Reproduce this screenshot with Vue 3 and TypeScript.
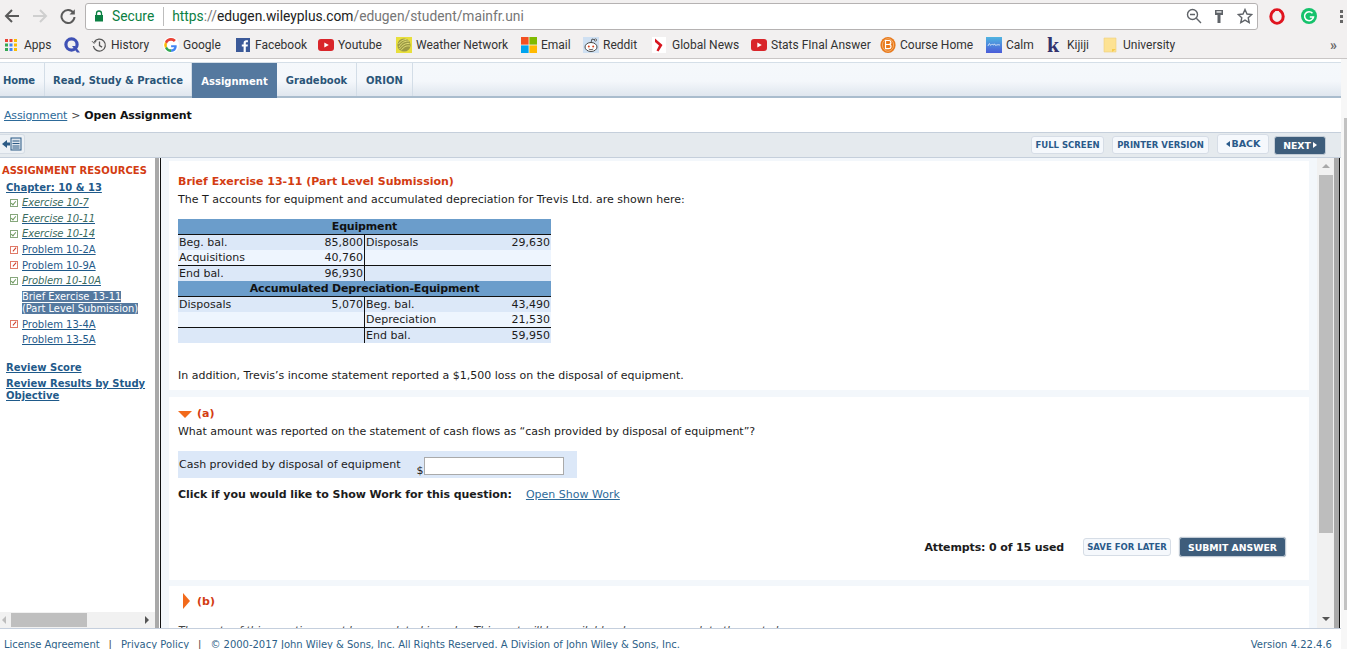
<script setup lang="ts">
interface Bookmark {
  label: string
  width: number
  icon: string
}

const bookmarks: Bookmark[] = [
  { label: 'Apps', width: 59, icon: '<svg width="16" height="16" viewBox="0 0 16 16"><g><rect x="1" y="2" width="3" height="3" fill="#ea4335"/><rect x="5.500" y="2" width="3" height="3" fill="#ea4335"/><rect x="10" y="2" width="3" height="3" fill="#fbbc05"/><rect x="1" y="6.500" width="3" height="3" fill="#34a853"/><rect x="5.500" y="6.500" width="3" height="3" fill="#4285f4"/><rect x="10" y="6.500" width="3" height="3" fill="#fbbc05"/><rect x="1" y="11" width="3" height="3" fill="#34a853"/><rect x="5.500" y="11" width="3" height="3" fill="#4285f4"/><rect x="10" y="11" width="3" height="3" fill="#fbbc05"/></g></svg>' },
  { label: '', width: 28, icon: '<svg width="18" height="18" viewBox="0 0 18 18"><circle cx="8.500" cy="8.500" r="5.600" fill="none" stroke="#3f51b5" stroke-width="3.200"/><path d="M9 10l5 6.500h3L12 10z" fill="#3f51b5"/></svg>' },
  { label: 'History', width: 72, icon: '<svg width="16" height="16" viewBox="0 0 16 16" fill="none" stroke="#555" stroke-width="1.300"><path d="M3.200 5a6 6 0 1 1-.8 4"/><path d="M1 4.200l2.200 2.200 2-2.400" stroke-width="1"/><path d="M8.500 4.500V8.600l2.600 1.500"/></svg>' },
  { label: 'Google', width: 72, icon: '<svg width="16" height="16" viewBox="0 0 16 16"><circle cx="8" cy="8" r="8" fill="#fff"/><path d="M13.600 8.200H8.100v2h3.200c-.4 1.300-1.600 2.100-3.200 2.100V15c3.200 0 5.600-2.300 5.600-5.700z" fill="#4285f4"/><path d="M8.100 12.300A4.200 4.200 0 0 1 4 9.400l-2 1.900A6.800 6.800 0 0 0 8.100 15z" fill="#34a853"/><path d="M4 9.400a4.300 4.300 0 0 1 0-2.700L2 4.800a7 7 0 0 0 0 6.500z" fill="#fbbc05"/><path d="M8.100 3.800c1.100 0 2 .4 2.800 1.100l2-2A6.800 6.800 0 0 0 2 4.800l2 1.900a4.200 4.200 0 0 1 4.100-2.900z" fill="#ea4335"/></svg>' },
  { label: 'Facebook', width: 83, icon: '<svg width="16" height="16" viewBox="0 0 16 16"><rect x="1" y="1" width="14" height="14" fill="#3b5998"/><path d="M10.800 15V9.600h1.800l.3-2.100h-2.100V6.200c0-.6.2-1 1-1h1.100V3.300c-.2 0-.9-.1-1.600-.1-1.600 0-2.700 1-2.700 2.800v1.500H6.800v2.100h1.800V15z" fill="#fff"/></svg>' },
  { label: 'Youtube', width: 78, icon: '<svg width="16" height="16" viewBox="0 0 16 16"><rect x="0" y="2" width="16" height="12" rx="3" fill="#d9252a"/><path d="M6.300 5.400v5.200L10.800 8z" fill="#fff"/></svg>' },
  { label: 'Weather Network', width: 125, icon: '<svg width="16" height="16" viewBox="0 0 16 16"><rect width="16" height="16" fill="#e8df3c"/><circle cx="8" cy="8" r="6.600" fill="#9c9a45"/><path d="M3 10c3-5 6-6 10-6M3.500 12c3-4 6-6 10-5.500M5 13.500c3-4 5-5 9-4.500M2.500 7c2-3 5-4.500 8-4.500" stroke="#e8e47a" stroke-width=".9" fill="none"/></svg>' },
  { label: 'Email', width: 62, icon: '<svg width="16" height="16" viewBox="0 0 16 16"><rect x="0" width="7.600" height="7.600" fill="#f25022"/><rect x="8.400" width="7.600" height="7.600" fill="#7fba00"/><rect x="0" y="8.400" width="7.600" height="7.600" fill="#00a4ef"/><rect x="8.400" y="8.400" width="7.600" height="7.600" fill="#ffb900"/></svg>' },
  { label: 'Reddit', width: 69, icon: '<svg width="16" height="16" viewBox="0 0 16 16"><rect width="16" height="16" fill="#cfe0f2"/><ellipse cx="8" cy="10" rx="6" ry="4.500" fill="#fff" stroke="#333" stroke-width=".9"/><circle cx="5.800" cy="9.400" r="1" fill="#d9401c"/><circle cx="10.200" cy="9.400" r="1" fill="#d9401c"/><path d="M5.800 12c1.400.9 3 .9 4.400 0M8 5.500l1-3.500 3 .8" stroke="#333" stroke-width=".8" fill="none"/><circle cx="12.500" cy="3" r="1.100" fill="#fff" stroke="#333" stroke-width=".7"/></svg>' },
  { label: 'Global News', width: 99, icon: '<svg width="16" height="16" viewBox="0 0 16 16"><rect x="0" width="14" height="16" fill="#fff"/><path d="M3 1.500L10.500 8l-4 6.500-2-1 2.500-5L3 5z" fill="#d8151f"/></svg>' },
  { label: 'Stats FInal Answer', width: 129, icon: '<svg width="16" height="16" viewBox="0 0 16 16"><rect x="0" y="2" width="16" height="12" rx="3" fill="#d9252a"/><path d="M6.300 5.400v5.200L10.800 8z" fill="#fff"/></svg>' },
  { label: 'Course Home', width: 106, icon: '<svg width="16" height="16" viewBox="0 0 16 16"><ellipse cx="8" cy="8" rx="7.600" ry="8" fill="#e8781a"/><ellipse cx="8" cy="8" rx="5.600" ry="6.300" fill="none" stroke="#f7c590" stroke-width=".7"/><path d="M5.500 3.500h3.200a2 2 0 0 1 .8 3.900 2.200 2.200 0 0 1-.8 4.300H5.500zM5.500 7.500h3.500" fill="none" stroke="#fff" stroke-width="1.200"/></svg>' },
  { label: 'Calm', width: 61, icon: '<svg width="16" height="16" viewBox="0 0 16 16"><defs><linearGradient id="calm" x1="0" y1="0" x2="0" y2="1"><stop offset="0" stop-color="#4fb4e0"/><stop offset="1" stop-color="#4a5bd8"/></linearGradient></defs><rect width="16" height="16" fill="url(#calm)"/><path d="M2 9c1-3 2-3 2-1 1 1 2-2 3 0 1 1 1-3 2 0 1 1 2-1 5 0" stroke="#fff" stroke-width=".7" fill="none"/></svg>' },
  { label: 'Kijiji', width: 56, icon: '<span class="kijiji">k</span>' },
  { label: 'University', width: 90, icon: '<svg width="16" height="16" viewBox="0 0 16 16"><path d="M1 1h12v14H1z" fill="#fde293" stroke="#eed27c" stroke-width=".6"/><path d="M9 15v-3h4" fill="#f7cb4d"/></svg>' },
]

const menuTabs = [
  { label: 'Home', width: 45 },
  { label: 'Read, Study & Practice', width: 147 },
  { label: 'Assignment', width: 85, active: true },
  { label: 'Gradebook', width: 80 },
  { label: 'ORION', width: 56 },
]

interface ResourceItem {
  label: string
  status: '' | 'done' | 'partial'
  italic?: boolean
}

const resourcesTop: ResourceItem[] = [
  { label: 'Exercise 10-7', status: 'done', italic: true },
  { label: 'Exercise 10-11', status: 'done', italic: true },
  { label: 'Exercise 10-14', status: 'done', italic: true },
  { label: 'Problem 10-2A', status: 'partial' },
  { label: 'Problem 10-9A', status: 'partial' },
  { label: 'Problem 10-10A', status: 'done', italic: true },
]

const resourcesBottom: ResourceItem[] = [
  { label: 'Problem 13-4A', status: 'partial' },
  { label: 'Problem 13-5A', status: '' },
]
</script>

<template>
  <div class="screen">
    <header class="browser">
      <div class="toolbar-row">
        <svg class="nav-btn first" width="18" height="16" viewBox="0 0 18 16" fill="none" stroke="#5a5a5a" stroke-width="2"><path d="M16 8H3M9 2L3 8l6 6" /></svg>
        <svg class="nav-btn" width="18" height="16" viewBox="0 0 18 16" fill="none" stroke="#cfcfcf" stroke-width="2"><path d="M2 8h13M9 2l6 6-6 6" /></svg>
        <svg class="nav-btn" width="18" height="16" viewBox="0 0 18 16" fill="none" stroke="#5a5a5a" stroke-width="2"><path d="M14.500 5A6.500 6.500 0 1 0 15.500 9" /><path d="M15.800 1.200v5.300h-5.300z" fill="#5a5a5a" stroke="none" /></svg>
        <div class="omnibox">
          <svg width="10" height="12" viewBox="0 0 10 12" class="lock"><path d="M2.500 5V3.500a2.500 2.500 0 0 1 5 0V5" fill="none" stroke="#0b8043" stroke-width="1.300" /><rect x="1" y="5" width="8" height="6.500" fill="#0b8043" /></svg>
          <span class="secure">Secure</span>
          <span class="omni-sep"></span>
          <span class="url"><span class="scheme">https</span><span class="dim">://</span><span class="host">edugen.wileyplus.com</span><span class="dim">/edugen/student/mainfr.uni</span></span>
          <span class="omni-icons">
            <svg width="16" height="16" viewBox="0 0 16 16" fill="none" stroke="#5f6368" stroke-width="1.400"><circle cx="6.500" cy="6.500" r="5" /><path d="M10.300 10.300L15 15M4 6.500h5" /></svg>
            <svg class="key" width="10" height="15" viewBox="0 0 10 15"><path d="M1 1h8v5H6.500v8h-3V6H1z" fill="#5f6368" /><rect x="2.500" y="2.300" width="5" height="1.300" fill="#fff" /></svg>
            <svg width="16" height="16" viewBox="0 0 16 16" fill="none" stroke="#5f6368" stroke-width="1.400"><path d="M8 1.500l2 4.500 4.800.5-3.600 3.200 1 4.800L8 12.100l-4.200 2.400 1-4.800L1.200 6.500 6 6z" /></svg>
          </span>
        </div>
        <svg class="ext opera" width="16" height="17" viewBox="0 0 16 17"><ellipse cx="8" cy="8.500" rx="6.200" ry="6.800" fill="none" stroke="#e0141f" stroke-width="3" /><path d="M5.300 5.500l1-2.500h3.500l1 2.500-.6 6L8 14l-2.200-2.500z" fill="#f5eeee" /></svg>
        <svg class="ext grammarly" width="16" height="16" viewBox="0 0 16 16"><circle cx="8" cy="8" r="8" fill="#15c26b" /><path d="M11.500 5.200A4.500 4.500 0 1 0 12.500 9H8.800" fill="none" stroke="#fff" stroke-width="1.500" /></svg>
        <span class="dots"><i></i><i></i><i></i></span>
      </div>
      <nav class="bookmarks">
        <a v-for="b in bookmarks" :key="b.label + b.width" class="bookmark" :style="{ width: b.width + 'px' }">
          <!-- eslint-disable-next-line vue/no-v-html -->
          <span class="bm-icon" v-html="b.icon"></span>
          <span v-if="b.label" class="bm-label">{{ b.label }}</span>
        </a>
        <span class="more">»</span>
      </nav>
    </header>

    <div class="page">
      <div class="site">
        <nav class="menu">
          <a v-for="t in menuTabs" :key="t.label" class="tab" :class="{ active: t.active }" :style="{ width: t.width + 'px' }">{{ t.label }}</a>
        </nav>

        <div class="crumbs"><a class="crumb-link">Assignment</a> &gt; <b>Open Assignment</b></div>

        <div class="actions">
          <button class="collapse">
            <svg width="20" height="14" viewBox="0 0 20 14"><path d="M0 7l5-4v2.500h3v3H5V11z" fill="#2b5a85" /><rect x="9" y="1" width="10" height="12" fill="#dfe6ee" stroke="#2b5a85" /><path d="M10.500 4h7M10.500 6.500h7M10.500 9h7M10.500 11h7" stroke="#2b5a85" /></svg>
          </button>
          <div class="action-group">
            <button class="btn-light small">FULL SCREEN</button>
            <button class="btn-light small printer">PRINTER VERSION</button>
            <button class="btn-light back"><span class="tri-left"></span>BACK</button>
            <button class="btn-dark next">NEXT<span class="tri-right"></span></button>
          </div>
        </div>

        <div class="workspace">
          <aside class="sidebar">
            <div class="side-scroll">
              <h3 class="side-title">ASSIGNMENT RESOURCES</h3>
              <a class="chapter">Chapter: 10 &amp; 13</a>
              <ul class="res-list">
                <li v-for="r in resourcesTop" :key="r.label" class="res-item">
                  <span class="check" :class="r.status"></span>
                  <a class="res-link" :class="{ italic: r.italic }">{{ r.label }}</a>
                </li>
                <li class="res-item current"><span class="check"></span><span class="current-text"><span>Brief Exercise 13-11<br />(Part Level Submission)</span></span></li>
                <li v-for="r in resourcesBottom" :key="r.label" class="res-item">
                  <span class="check" :class="r.status"></span>
                  <a class="res-link">{{ r.label }}</a>
                </li>
              </ul>
              <a class="side-strong score">Review Score</a>
              <a class="side-strong results">Review Results by Study Objective</a>
            </div>
            <div class="hbar">
              <span class="arrow-left"></span>
              <span class="hthumb"></span>
              <span class="arrow-right"></span>
            </div>
          </aside>
          <div class="splitter"></div>

          <main class="content">
            <div class="panels">
              <section class="panel intro">
                <h2 class="title">Brief Exercise 13-11 (Part Level Submission)</h2>
                <p class="lead">The T accounts for equipment and accumulated depreciation for Trevis Ltd. are shown here:</p>
                <table class="ledger">
                  <tbody>
                    <tr class="head"><th colspan="4">Equipment</th></tr>
                    <tr class="odd"><td>Beg. bal.</td><td class="num mid">85,800</td><td>Disposals</td><td class="num">29,630</td></tr>
                    <tr class="even rule"><td>Acquisitions</td><td class="num mid">40,760</td><td></td><td></td></tr>
                    <tr class="odd"><td>End bal.</td><td class="num mid">96,930</td><td></td><td></td></tr>
                    <tr class="head"><th colspan="4">Accumulated Depreciation-Equipment</th></tr>
                    <tr class="odd"><td>Disposals</td><td class="num mid">5,070</td><td>Beg. bal.</td><td class="num">43,490</td></tr>
                    <tr class="even rule"><td></td><td class="mid"></td><td>Depreciation</td><td class="num">21,530</td></tr>
                    <tr class="odd"><td></td><td class="mid"></td><td>End bal.</td><td class="num">59,950</td></tr>
                  </tbody>
                </table>
                <p class="addition">In addition, Trevis’s income statement reported a $1,500 loss on the disposal of equipment.</p>
              </section>

              <section class="panel part-a">
                <div class="part-head"><span class="tri-open"></span><span class="part-label">(a)</span></div>
                <p class="question">What amount was reported on the statement of cash flows as “cash provided by disposal of equipment”?</p>
                <div class="answer-row">
                  <span class="answer-label">Cash provided by disposal of equipment</span>
                  <span class="dollar">$</span>
                  <input class="answer-input" type="text" />
                </div>
                <div class="show-work"><b>Click if you would like to Show Work for this question:</b><a class="work-link">Open Show Work</a></div>
                <div class="submit-row">
                  <b class="attempts">Attempts: 0 of 15 used</b>
                  <button class="btn-light small save">SAVE FOR LATER</button>
                  <button class="btn-dark submit">SUBMIT ANSWER</button>
                </div>
              </section>

              <section class="panel part-b">
                <div class="part-head"><span class="tri-closed"></span><span class="part-label">(b)</span></div>
                <p class="locked">The parts of this question must be completed in order. This part will be available when you complete the part above.</p>
              </section>
            </div>
            <div class="vbar">
              <span class="arrow-up"></span>
              <span class="vthumb"></span>
              <span class="arrow-down"></span>
            </div>
            <div class="edge"></div>
          </main>
        </div>

        <footer class="foot">
          <span class="foot-links">
            <a>License Agreement</a><i>|</i><a>Privacy Policy</a><i>|</i><span>© 2000-2017 John Wiley &amp; Sons, Inc. All Rights Reserved. A Division of John Wiley &amp; Sons, Inc.</span>
          </span>
          <span class="version">Version 4.22.4.6</span>
        </footer>
      </div>
      <div class="page-bar"><span class="page-thumb"></span></div>
    </div>
  </div>
</template>

<style>
html,
body {
  margin: 0;
  overflow: hidden;
  background: #fff;
}
.bm-icon svg {
  display: block;
}
.kijiji {
  display: block;
  font: 700 22px/16px "Liberation Serif", serif;
  color: #33336e;
}
</style>

<style scoped>
.screen {
  width: 1347px;
  height: 649px;
  display: flex;
  flex-direction: column;
  overflow: hidden;
  font-family: "DejaVu Sans", Verdana, sans-serif;
  font-size: 11px;
  color: #1c1c1c;
}

.browser {
  height: 59px;
  flex: none;
  background: #f2f0f0;
  border-bottom: 1px solid #c9c6c6;
  box-sizing: border-box;
}
.toolbar-row {
  height: 31px;
  display: flex;
  align-items: center;
  padding-top: 1px;
  box-sizing: border-box;
}
.nav-btn {
  margin-right: 10px;
  flex: none;
}
.nav-btn.first {
  margin-left: 3px;
}
.nav-btn:nth-child(3) {
  margin-right: 8px;
}
.omnibox {
  width: 1173px;
  height: 27px;
  box-sizing: border-box;
  background: #fff;
  border: 1px solid #b5b2b2;
  border-radius: 3px;
  display: flex;
  align-items: center;
  padding-left: 8px;
  font-family: Roboto, "Open Sans", sans-serif;
  font-size: 13.800px;
}
.lock {
  flex: none;
}
.secure {
  margin-left: 8px;
  color: #0b8043;
}
.omni-sep {
  width: 1px;
  height: 19px;
  background: #bdbdbd;
  margin: 0 8px 0 9px;
}
.scheme {
  color: #0b8043;
}
.dim {
  color: #767676;
}
.host {
  color: #222;
}
.omni-icons {
  margin-left: auto;
  display: flex;
  align-items: center;
  gap: 12px;
  padding-right: 4px;
}
.key {
  margin-right: 1px;
}
.ext {
  flex: none;
}
.opera {
  margin-left: 11px;
}
.grammarly {
  margin-left: 16px;
}
.dots {
  display: flex;
  flex-direction: column;
  gap: 2px;
  margin-left: 23px;
}
.dots i {
  width: 3px;
  height: 3px;
  background: #666;
  display: block;
}
.bookmarks {
  height: 27px;
  display: flex;
  align-items: center;
  padding-left: 4px;
  font-family: Roboto, "Open Sans", sans-serif;
  font-size: 12px;
  color: #333;
}
.bookmark {
  display: flex;
  align-items: center;
  gap: 4px;
  flex: none;
  white-space: nowrap;
}
.bm-icon {
  width: 16px;
  flex: none;
}
.more {
  margin-left: auto;
  margin-right: 10px;
  font-size: 14px;
  font-weight: 700;
  color: #666;
}

.page {
  flex: 1;
  min-height: 0;
  display: flex;
  padding-top: 3px;
  background: #fff;
}
.site {
  width: 1341px;
  flex: none;
  display: flex;
  flex-direction: column;
  min-height: 0;
}
.page-bar {
  flex: 1;
  background: #f7f7f7;
  display: flex;
  justify-content: flex-end;
  align-items: flex-start;
  padding-top: 59px;
  margin-top: -3px;
  box-sizing: border-box;
}
.page-thumb {
  display: block;
  width: 3px;
  height: 492px;
  background: #c2c2c2;
}

.menu {
  height: 36px;
  flex: none;
  display: flex;
  box-sizing: border-box;
  border-top: 1px solid #d5dfe8;
  border-bottom: 2px solid #a9bccd;
  background: linear-gradient(#f5f8fb 0, #f4f7fb 55%, #dfe6ee 100%);
}
.tab {
  display: flex;
  align-items: center;
  justify-content: center;
  box-sizing: border-box;
  padding-top: 1px;
  border-right: 1px solid #d3dde7;
  font-weight: 700;
  font-size: 10px;
  color: #2a5578;
  white-space: nowrap;
}
.tab:first-child {
  justify-content: flex-start;
  padding-left: 3px;
  letter-spacing: -0.1px;
}
.tab.active {
  background: #55799f;
  color: #fff;
  border-right: 0;
  margin-bottom: -2px;
}

.crumbs {
  height: 34px;
  flex: none;
  display: flex;
  align-items: center;
  gap: 4px;
  padding-left: 4px;
  box-sizing: border-box;
  color: #444;
  letter-spacing: -0.15px;
}
.crumbs b {
  color: #111;
}
.crumb-link {
  color: #2d6a99;
  text-decoration: underline;
}

.actions {
  height: 26px;
  flex: none;
  box-sizing: border-box;
  display: flex;
  align-items: center;
  justify-content: space-between;
  background: #e5eaee;
  border-top: 1px solid #c5cfdb;
  border-bottom: 1px solid #c5cfdb;
  padding-right: 15px;
}
.collapse {
  width: 25px;
  height: 20px;
  margin-top: -3px;
  padding: 0 0 0 2px;
  border: 1px solid #d5dce4;
  border-left: 0;
  border-radius: 0 3px 3px 0;
  background: #edf1f5;
  display: flex;
  align-items: center;
}
.action-group {
  display: flex;
  align-items: center;
}
button {
  font-family: inherit;
  cursor: pointer;
}
.btn-light {
  background: #f5f8fc;
  border: 1px solid #d6dde6;
  border-radius: 3px;
  color: #2a5a8a;
  font-weight: 700;
  padding: 0;
  white-space: nowrap;
}
.small {
  height: 18px;
  font-size: 8.500px;
}
.action-group .small {
  width: 73px;
  margin-right: 8px;
}
.action-group .printer {
  width: 97px;
}
.back {
  width: 52px;
  height: 20px;
  margin-top: -3px;
  font-size: 9.500px;
  display: flex;
  align-items: center;
  justify-content: center;
  gap: 2px;
}
.btn-dark {
  background: #3e5d7b;
  border: 1px solid #c3ccd6;
  border-radius: 3px;
  color: #fff;
  font-weight: 700;
  padding: 0;
  white-space: nowrap;
}
.next {
  width: 52px;
  height: 19px;
  margin-left: 5px;
  font-size: 9.300px;
  display: flex;
  align-items: center;
  justify-content: center;
  gap: 2px;
}
.tri-left {
  border: 3px solid transparent;
  border-left: 0;
  border-right: 4px solid #2a5a8a;
}
.tri-right {
  border: 3px solid transparent;
  border-right: 0;
  border-left: 4px solid #fff;
}

.workspace {
  height: 470px;
  flex: none;
  display: flex;
  min-height: 0;
}
.sidebar {
  width: 155px;
  flex: none;
  display: flex;
  flex-direction: column;
  background: #fff;
}
.side-scroll {
  flex: 1;
  min-height: 0;
  padding: 6px 0 0 2px;
  box-sizing: border-box;
  white-space: nowrap;
}
.side-title {
  margin: 0;
  font-size: 10px;
  line-height: 13px;
  font-weight: 700;
  color: #d33c12;
}
.chapter {
  display: block;
  margin: 4px 0 0 4px;
  font-size: 10px;
  line-height: 13px;
  font-weight: 700;
  color: #1f5a8a;
  text-decoration: underline;
}
.res-list {
  list-style: none;
  margin: 1px 0 0;
  padding: 0 0 0 8px;
}
.res-item {
  display: flex;
  align-items: center;
  height: 15.600px;
  font-size: 10px;
  gap: 4px;
}
.check {
  width: 8px;
  height: 8px;
  flex: none;
  box-sizing: border-box;
  position: relative;
}
.check.done {
  border: 1px solid #86a77c;
}
.check.done::after {
  content: "";
  position: absolute;
  left: 1px;
  top: 0;
  width: 2px;
  height: 4px;
  border: solid #6f9a60;
  border-width: 0 1px 1px 0;
  transform: rotate(40deg);
}
.check.partial {
  border: 1px solid #e07a68;
}
.check.partial::after {
  content: "";
  position: absolute;
  left: 2.500px;
  top: 0;
  width: 1px;
  height: 5px;
  background: #cf3a26;
  transform: rotate(40deg);
}
.res-link {
  color: #1f5a8a;
  text-decoration: underline;
}
.res-link.italic {
  font-style: italic;
  color: #3a6a5e;
  text-decoration-color: #1f5a8a;
  letter-spacing: -0.1px;
}
.res-item.current {
  align-items: flex-start;
  line-height: 12px;
  padding-top: 2px;
  height: 26px;
}
.current-text {
  font-size: 9.900px;
}
.current-text span {
  background: #55799f;
  color: #fff;
  -webkit-box-decoration-break: clone;
  box-decoration-break: clone;
}
.side-strong {
  display: block;
  margin-left: 4px;
  font-size: 10px;
  line-height: 12px;
  font-weight: 700;
  color: #1f5a8a;
  text-decoration: underline;
  white-space: normal;
  width: 145px;
}
.score {
  margin-top: 14px;
}
.results {
  margin-top: 4px;
}

.hbar {
  height: 16px;
  flex: none;
  background: #f1f1f1;
  display: flex;
  align-items: center;
  position: relative;
}
.hthumb {
  position: absolute;
  left: 11px;
  top: 1px;
  width: 76px;
  height: 14px;
  background: #bfbfbf;
}
.arrow-left {
  margin-left: 2px;
  border: 4px solid transparent;
  border-left: 0;
  border-right: 4px solid #bdbdbd;
}
.arrow-right {
  margin-left: auto;
  margin-right: 6px;
  border: 4px solid transparent;
  border-right: 0;
  border-left: 4px solid #555;
}
.splitter {
  width: 6px;
  flex: none;
  box-sizing: border-box;
  background: #fff;
  border-left: 4px solid #a9a9a9;
  border-right: 1px solid #111;
}

.content {
  flex: 1;
  min-width: 0;
  display: flex;
  background: #f3f7fb;
}
.panels {
  flex: 1;
  min-width: 0;
  padding: 3px 8px 0 8px;
  overflow: hidden;
  display: flex;
  flex-direction: column;
  gap: 6px;
}
.panel {
  background: #fff;
  padding: 0 9px;
  box-sizing: border-box;
  flex: none;
}
.intro {
  height: 229px;
  padding-top: 14px;
  margin-bottom: 1px;
}
.title {
  margin: 0;
  font-size: 11px;
  line-height: 14px;
  font-weight: 700;
  color: #d33c12;
}
.lead {
  margin: 4px 0 0;
  line-height: 14px;
}
.ledger {
  margin-top: 12px;
  width: 373px;
  border-collapse: collapse;
  table-layout: fixed;
  line-height: 13px;
}
.ledger td,
.ledger th {
  padding: 0 1px;
  height: 15.500px;
  box-sizing: border-box;
  white-space: nowrap;
  overflow: hidden;
}
.ledger td:nth-child(1) {
  width: 145px;
}
.ledger td:nth-child(2) {
  width: 41px;
}
.ledger td:nth-child(3) {
  width: 127px;
}
.ledger .head th {
  background: #6b9dcb;
  color: #111;
  font-weight: 700;
  text-align: center;
  border-bottom: 1px solid #111;
  font-size: 11px;
  letter-spacing: -0.17px;
}
.odd td {
  background: #dce8f8;
}
.even td {
  background: #eef5fe;
}
.rule td {
  border-bottom: 1px solid #111;
}
.num {
  text-align: right;
}
.mid {
  border-right: 1px solid #111;
}
.addition {
  margin: 26px 0 0;
  line-height: 14px;
}

.part-a {
  height: 183px;
  padding-top: 9px;
  position: relative;
}
.part-head {
  display: flex;
  align-items: center;
  height: 14px;
  font-weight: 700;
  color: #d33c12;
}
.tri-open {
  width: 0;
  height: 0;
  border-left: 7px solid transparent;
  border-right: 7px solid transparent;
  border-top: 7px solid #f26a1b;
  margin-right: 5px;
  margin-top: 2px;
}
.question {
  margin: 5px 0 0;
  line-height: 14px;
  letter-spacing: -0.04px;
}
.answer-row {
  margin-top: 12px;
  width: 399px;
  height: 27px;
  background: #dce8f8;
  display: flex;
  align-items: center;
  padding-left: 1px;
  box-sizing: border-box;
}
.dollar {
  margin-left: 16px;
  margin-top: 11px;
  width: 7px;
}
.answer-input {
  width: 140px;
  height: 18px;
  box-sizing: border-box;
  margin: 2px 0 0;
  padding: 0;
  border: 1px solid #aaa;
  background: #fff;
}
.show-work {
  margin-top: 10px;
  display: flex;
  align-items: center;
  line-height: 14px;
}
.show-work b {
  letter-spacing: -0.04px;
}
.work-link {
  margin-left: 14px;
  color: #2d6a99;
  text-decoration: underline;
}
.submit-row {
  position: absolute;
  right: 23px;
  top: 140px;
  display: flex;
  align-items: center;
}
.attempts {
  margin-right: 19px;
  letter-spacing: -0.13px;
}
.save {
  width: 88px;
  margin-right: 8px;
}
.submit {
  width: 107px;
  height: 20px;
  font-size: 9.300px;
  box-shadow: 0 0 1px #8899aa;
}

.part-b {
  height: 60px;
  padding-top: 8px;
}
.tri-closed {
  width: 0;
  height: 0;
  border-top: 8px solid transparent;
  border-bottom: 8px solid transparent;
  border-left: 7px solid #f26a1b;
  margin: 0 7px 0 5px;
}
.locked {
  margin: 16px 0 0;
  line-height: 14px;
  font-style: italic;
  color: #444;
  white-space: nowrap;
  letter-spacing: -0.15px;
}

.vbar {
  width: 17px;
  flex: none;
  background: #f1f1f1;
  display: flex;
  flex-direction: column;
  align-items: center;
  position: relative;
}
.arrow-up {
  margin-top: 6px;
  border: 4px solid transparent;
  border-top: 0;
  border-bottom: 4px solid #a8a8a8;
}
.vthumb {
  position: absolute;
  left: 2px;
  top: 17px;
  width: 14px;
  height: 358px;
  background: #bdbdbd;
}
.arrow-down {
  margin-top: auto;
  margin-bottom: 7px;
  border: 4px solid transparent;
  border-bottom: 0;
  border-top: 4px solid #555;
}
.edge {
  width: 7px;
  flex: none;
  box-sizing: border-box;
  background: #a9a9a9;
  border-right: 1px solid #fff;
  box-shadow: inset -1px 0 0 #111;
}

.foot {
  height: 22px;
  flex: none;
  box-sizing: border-box;
  border-top: 1px solid #c5cfdd;
  border-bottom: 1px solid #c9c9c9;
  display: flex;
  justify-content: space-between;
  padding: 10px 9px 0 4px;
  font-size: 10px;
  line-height: 12px;
  color: #2d5f88;
  overflow: hidden;
  white-space: nowrap;
}
.foot-links a:first-child {
  letter-spacing: -0.05px;
}
.foot-links i {
  font-style: normal;
  margin: 0 9px 0 9px;
  color: #444;
}
.foot-links span {
  letter-spacing: -0.03px;
}
</style>
